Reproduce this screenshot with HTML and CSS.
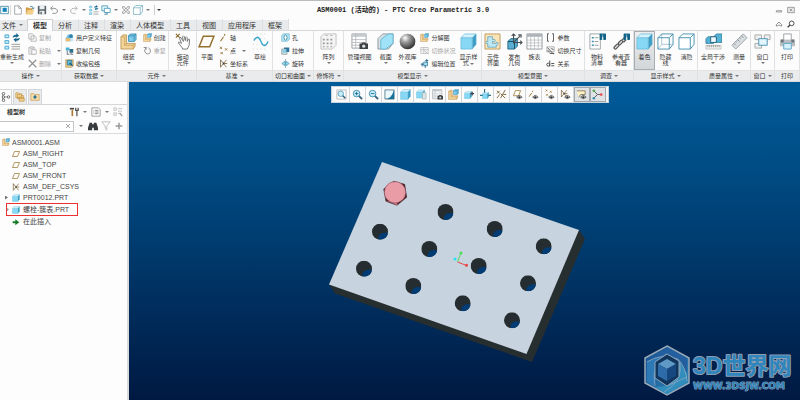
FILE: index.html
```html
<!DOCTYPE html>
<html lang="zh-CN">
<head>
<meta charset="utf-8">
<title>ASM0001 (活动的) - PTC Creo Parametric 3.0</title>
<link rel="stylesheet" href="styles.css">
</head>
<body>
<svg class="sprite" aria-hidden="true">
  <!-- shared shapes -->
  <symbol id="cube" viewBox="0 0 18 18"><path d="M1 5 5 1h12l-4 4z" fill="#d6f2fc"/><path d="M13 5l4-4v11l-4 5z" fill="#3f9cc4"/><path d="M1 5h12v12H1z" fill="#86d8f4"/><path d="M1 5 5 1h12v11l-4 5H1zM1 5h12v12M13 5l4-4" fill="none" stroke="#5cb4d4" stroke-width=".7"/></symbol>
  <symbol id="cube-hidden" viewBox="0 0 18 18"><path d="M1 5 5 1h12v11l-4 5H1z" fill="#fff"/><path d="M5 1v11h12M1 17l4-5" fill="none" stroke="#a9c4cf"/><path d="M1 5 5 1h12v11l-4 5H1zM1 5h12v12M13 5l4-4" fill="none" stroke="#4792ae"/></symbol>
  <symbol id="cube-wire" viewBox="0 0 18 18"><path d="M1 5 5 1h12v11l-4 5H1zM1 5h12v12M13 5l4-4" fill="#fff" stroke="#4792ae"/></symbol>
  <symbol id="asm" viewBox="0 0 18 18"><path d="M1 4 3 2h4v9h9v3l-2 3H1z" fill="#f2d49b" stroke="#b58a45" stroke-width=".8"/><path d="M1 4h4v9h9v4M5 13l2-2M14 13l2-2" fill="none" stroke="#c79b52" stroke-width=".8"/><path d="M9 3l2-2h6v6l-2 2H9z" fill="#7ccbea" stroke="#2b83aa" stroke-width=".8"/><path d="M9 3h6v6M15 3l2-2" fill="none" stroke="#2b83aa" stroke-width=".8"/></symbol>
  <symbol id="plane" viewBox="0 0 16 16"><path d="M5 3h10l-4 10H1z" fill="#fffdf5" stroke="#92702e" stroke-width="1.4"/></symbol>
  <symbol id="csys" viewBox="0 0 12 12"><path d="M2 1l4 5 4-5M2 11l4-5 4 5M2 1v10M6 6h5" fill="none" stroke="#74582a"/><circle cx="6" cy="6" r="1.2" fill="#444"/></symbol>
  <symbol id="axis" viewBox="0 0 12 12"><path d="M2 11 6 5M7 3.500 8 1.500" stroke="#997431" stroke-width="1.500"/></symbol>
  <symbol id="points" viewBox="0 0 12 12"><path d="M1 1l3 3m0-3L1 4M8 3l3 3m0-3L8 6M2 8l3 3m0-3-3 3" stroke="#92702e" stroke-width="1.100"/></symbol>
  <symbol id="eye" viewBox="0 0 12 12"><path d="M5 9q3-4 6 0-3 3-6 0z" fill="#ccc" stroke="#444" stroke-width=".8"/><circle cx="8" cy="9" r="1.200" fill="#333"/></symbol>
  <symbol id="lens" viewBox="0 0 12 12"><path d="M7 7l4 4" stroke="#315f78" stroke-width="2"/><circle cx="5" cy="5" r="3.600" fill="#c9eefb" stroke="#3f8eae"/></symbol>
  <symbol id="info" viewBox="0 0 8 8"><rect width="8" height="8" rx="1" fill="#126487"/><path d="M4 1.500v1M4 3.500V7M3 7h2" stroke="#fff" stroke-width="1.200"/></symbol>
  <!-- quick access -->
  <symbol id="app" viewBox="0 0 12 12"><rect x="1" y="1" width="10" height="10" fill="#fff" stroke="#36809e"/><rect x="3.500" y="3" width="5.500" height="5.500" fill="#1584b9"/></symbol>
  <symbol id="new" viewBox="0 0 12 12"><path d="M2 1h5l3 3v7H2z" fill="#fff" stroke="#7e8489" stroke-width=".8"/><path d="M7 1v3h3" fill="none" stroke="#7e8489" stroke-width=".8"/></symbol>
  <symbol id="open" viewBox="0 0 12 12"><path d="M1 3h3l1 1h4v7H1z" fill="#d19b48"/><path d="M1 11l2-5h8l-2 5z" fill="#f4cf87"/><path d="M6 2q3-2 4 2M8.500 3.500 10 5l1-2" fill="none" stroke="#38738c" stroke-width=".9"/></symbol>
  <symbol id="save" viewBox="0 0 12 12"><path d="M1 1h10v10H1z" fill="#586268"/><path d="M3 1h6v4H3zM3 7h6v4H3z" fill="#edf0f1"/><path d="M4 8h2v3H4z" fill="#6d767b"/></symbol>
  <symbol id="undo" viewBox="0 0 12 12"><path d="M4 10h4q3-1 2-4-1-2-4-2H2M4.500 1.500 2 4l2.500 2.500" fill="none" stroke="#929799" stroke-width="1.200"/></symbol>
  <symbol id="redo" viewBox="0 0 12 12"><path d="M8 10H4Q1 9 2 6q1-2 4-2h4M7.500 1.500 10 4 7.500 6.500" fill="none" stroke="#b7babc" stroke-width="1.200"/></symbol>
  <symbol id="regen" viewBox="0 0 18 18"><path d="M1 2h4v3H1zM1 8h4v3H1zM1 14h4v3H1z" fill="#bceafa" stroke="#4dabcf"/><path d="M8 12h9M8 14.500h9M8 17h9" stroke="#999"/><path d="M9 5q1-4 4-3V0l3 3-3 2V4q-2 0-4 1zM17 5q-1 4-4 3v2l-3-3 3-2v1q2 0 4-1z" fill="#17678d"/></symbol>
  <symbol id="windows" viewBox="0 0 12 12"><path d="M1 1h7v6H1z" fill="#e8f7fc" stroke="#4799b6"/><path d="M4 4h7v5H4z" fill="#fff" stroke="#4799b6"/><path d="M4 11h4l-2-2" fill="none" stroke="#337894"/></symbol>
  <symbol id="closewin" viewBox="0 0 12 12"><path d="M2 2h2l2 3 2-3h2v2L7 6l3 2v2H8L6 7l-2 3H2V8l3-2-3-2z" fill="#fff" stroke="#777" stroke-width=".8"/></symbol>
  <!-- ribbon small -->
  <symbol id="copy" viewBox="0 0 12 12"><path d="M1 1h5l2 2v5H1zM4 4h5l2 2v5H4z" fill="#f8f8f8" stroke="#aaa"/></symbol>
  <symbol id="paste" viewBox="0 0 12 12"><path d="M1 2h8v9H1z" fill="#e7e7e7" stroke="#bbb"/><path d="M3 1h4v2H3zM5 5h6v6H5z" fill="#fafafa" stroke="#aaa"/></symbol>
  <symbol id="delete" viewBox="0 0 12 12"><path d="M1 1l10 10M11 1 1 11" stroke="#8f8f8f" stroke-width="1.500"/></symbol>
  <symbol id="udf" viewBox="0 0 12 12"><path d="M1 7l3-5h5l2 4-3 5H1z" fill="#6abbe0"/><path d="M1 7h6v4H1z" fill="#f2bc66"/><circle cx="8" cy="4" r="2.500" fill="#307faa"/><path d="M7 7l4-1v5H7z" fill="#c7e8f5"/></symbol>
  <symbol id="copygeom" viewBox="0 0 12 12"><path d="M1 2h5v4H1z" fill="#4cb3d6"/><path d="M6 4h5v5H6z" fill="#2c718e"/><path d="M3 6v5h3M8 8v3h3" fill="none" stroke="#738088" stroke-width="1.400"/></symbol>
  <symbol id="shrink" viewBox="0 0 12 12"><path d="M1 1h10v8L9 11H1z" fill="#efcf89" stroke="#a2844d" stroke-width=".8"/><path d="M3 2h6v6H3z" fill="#63bee1" stroke="#246f8e"/><path d="M6 5l4 4" stroke="#17576f" stroke-width="1.500"/></symbol>
  <symbol id="repeat" viewBox="0 0 12 12"><path d="M4 2Q0 7 4 10q5 2 6-3 0-3-3-5M4 1v4M4 2H1" fill="none" stroke="#888" stroke-width="1.200"/></symbol>
  <symbol id="hole" viewBox="0 0 12 12"><path d="M1 3l3-2h7v8l-3 2H1z" fill="#b7e9f8" stroke="#57a8c4" stroke-width=".8"/><ellipse cx="6" cy="6" rx="2" ry="3.500" fill="#fff" stroke="#2b7895"/></symbol>
  <symbol id="extrude" viewBox="0 0 12 12"><path d="M1 4h7v7H1z" fill="#dce7eb" stroke="#879399"/><path d="M4 2h7v6H7V4H4z" fill="#33749a"/><path d="M2 5h5v4H2z" fill="#85cce5"/></symbol>
  <symbol id="revolve" viewBox="0 0 12 12"><path d="M1 6l4-3v2h2V3l4 3-4 3V7H5v2z" fill="#8ed9f0" stroke="#458da9" stroke-width=".8"/><path d="M6 0v12" stroke="#4a91ab" stroke-width=".8"/></symbol>
  <symbol id="status" viewBox="0 0 12 12"><path d="M1 2h10v8H1zM1 5h10M5 2v8" fill="#f5f5f5" stroke="#bbb"/><path d="M6 6l5 5" stroke="#aaa"/></symbol>
  <symbol id="editpos" viewBox="0 0 12 12"><path d="M5 4h5v5H5z" fill="#acdff0" stroke="#367a9c"/><path d="M1 7h4M3 5v5M9 0v5M7 2h4M7 8v4" stroke="#286c8e" stroke-width="1.200"/></symbol>
  <symbol id="params" viewBox="0 0 12 12"><path d="M4 1H2v10h2M8 1h2v10H8" fill="none" stroke="#555" stroke-width="1.200"/></symbol>
  <symbol id="dims" viewBox="0 0 12 12"><path d="M1 1h10v7H1z" fill="#eee" stroke="#888" stroke-width=".7"/><path d="M2 2l8 9M2 6l3 2M7 3l3 2M5 10h6" stroke="#555" stroke-width="1.200"/></symbol>
  <symbol id="relations" viewBox="0 0 12 12"><circle cx="3" cy="7.500" r="2" fill="none" stroke="#444" stroke-width="1.200"/><path d="M5 2v8M7 6h4M7 9h4" stroke="#444" stroke-width="1.200"/></symbol>
  <!-- ribbon large -->
  <symbol id="hand" viewBox="0 0 18 18"><path d="M2 1l4 4m0-4L2 5" stroke="#8d6929" stroke-width="1.200"/><path d="M9 16 5 11q-1-2 1-1l2 1-2-5q0-2 1.500-1L10 9 9 4q1-2 2 0l1 4V5q1-2 2 0v4l1-2q1-1 1.500 0L16 13l-2 4H9z" fill="#fff" stroke="#555" stroke-width=".8"/></symbol>
  <symbol id="sketch" viewBox="0 0 18 18"><path d="M1 1h16M1 6h16M1 12h16M1 17h16" stroke="#c3c7ca" stroke-width=".8" stroke-dasharray="1 3"/><path d="M2 8q4-7 7 0 4 10 8 1" fill="none" stroke="#3aa7cd" stroke-width="1.500"/></symbol>
  <symbol id="pattern" viewBox="0 0 18 18"><path d="M1 4l3-3h13v12l-4 4H1z" fill="#f4f4f4" stroke="#c0c0c0"/><path d="M3 6h2v2H3zM7 6h2v2H7zM11 6h2v2h-2zM3 10h2v2H3zM7 10h2v2H7zM11 10h2v2h-2zM3 14h2v1H3zM7 14h2v1H7zM11 14h2v1h-2zM6 2h2v1H6zM11 2h2v1h-2z" fill="#999"/></symbol>
  <symbol id="viewmgr" viewBox="0 0 18 18"><path d="M1 1h15v15H1z" fill="#fff" stroke="#9aa0a4"/><path d="M1 1h15v3H1z" fill="#c4cacd"/><path d="M1 7h15M1 10h15M1 13h15M5 1v15" stroke="#adb2b5" stroke-width=".8"/><path d="M9 11h2l1-1h3l1 1h2v6H9z" fill="#3c4246"/><circle cx="13.500" cy="14" r="1.700" fill="#ddd"/></symbol>
  <symbol id="section" viewBox="0 0 18 18"><path d="M1 6 6 1h11v10l-5 6H1z" fill="#d8e2e7" stroke="#75828a" stroke-width=".8"/><path d="M4 7 12 1h5v10l-8 6H4z" fill="#a0e3f8" stroke="#6bb6d0"/></symbol>
  <radialGradient id="ball" cx=".35" cy=".28" r=".75"><stop offset="0" stop-color="#fff"/><stop offset=".35" stop-color="#a0a0a0"/><stop offset="1" stop-color="#2c2c2c"/></radialGradient>
  <symbol id="sphere" viewBox="0 0 18 18"><circle cx="9" cy="9" r="8.300" fill="url(#ball)"/></symbol>
  <symbol id="interface" viewBox="0 0 18 18"><path d="M1 1h16v16H1z" fill="#fae3b5" stroke="#bd9c62"/><path d="M4 4h5v3q3-1 3 1t-3 1v2h4v-1q2-1 2 1t-2 2v2H4v-4q-2 1-2-1t2-1z" fill="#bfe8f5" stroke="#5ba2bf" stroke-width=".8"/></symbol>
  <symbol id="publish" viewBox="0 0 18 18"><path d="M2 9l3-3h7v8l-3 3H2z" fill="#5aaed1" stroke="#276985"/><path d="M2 9h7v8M9 9l3-3" fill="none" stroke="#174e64"/><path d="M8 11V1M8 10h9M8 10l7-7M6 3l2-2 2 2M15 8l2 2-2 2M13 2h3v3" fill="none" stroke="#434b4f" stroke-width="1.100"/></symbol>
  <symbol id="table" viewBox="0 0 18 18"><path d="M1 1h16v16H1z" fill="#fff" stroke="#92989b"/><path d="M1 1h16v3H1z" fill="#aeb4b7"/><path d="M1 7.500h16M1 10.500h16M1 13.500h16M5 4v13M9 4v13M13 4v13" stroke="#b5babd" stroke-width=".8"/></symbol>
  <symbol id="bom" viewBox="0 0 18 18"><path d="M1 1h11v16H1z" fill="#fff" stroke="#9ba2a6"/><path d="M3 5h2M3 9h2M3 13h2" stroke="#348dac" stroke-width="1.500"/><path d="M6 5h4M6 9h4M6 13h4" stroke="#999"/><use href="#info" x="11" width="7" height="8"/></symbol>
  <symbol id="chain" viewBox="0 0 18 18"><path d="M2.500 15.500 5 13M7 11l2-2M11 8l2-2" stroke="#555" stroke-width="4" stroke-linecap="round"/><path d="M2.500 15.500 5 13M7 11l2-2M11 8l2-2" stroke="#ddd" stroke-width="1.500" stroke-linecap="round"/><use href="#info" x="11" width="7" height="8"/></symbol>
  <symbol id="clash" viewBox="0 0 18 18"><path d="M1 6l2-2h6v7H1zM10 3l2-2h6v9h-8z" fill="#55b3d6" stroke="#2b7897" stroke-width=".8"/><path d="M6 4h6v6H6z" fill="#eef9fd" stroke="#24627d"/><path d="M1 13h16v4H1z" fill="#eee" stroke="#aaa" stroke-width=".6"/><path d="M3 13v2m2-2v2m2-2v2m2-2v2m2-2v2m2-2v2m2-2v2" stroke="#777" stroke-width=".7"/></symbol>
  <symbol id="ruler" viewBox="0 0 18 18"><path d="M1 13 13 1l4 4L5 17z" fill="#d8dee1" stroke="#98a0a4"/><path d="M3 11l2 2M5 9l1 1M7 7l2 2M9 5l1 1M11 3l2 2" stroke="#6c7376" stroke-width=".8"/></symbol>
  <symbol id="window" viewBox="0 0 18 18"><path d="M1 2h7v5H1zM11 2h6v5h-6zM1 11h7v5H1z" fill="#eee" stroke="#aaa"/><path d="M5 6h9v7H5z" fill="#e2f6fd" stroke="#4b93af"/></symbol>
  <symbol id="print" viewBox="0 0 18 18"><path d="M5 1h8v7H5z" fill="#fff" stroke="#9aa1a5"/><path d="M1 7h16v7H1z" fill="#b9bfc3"/><path d="M2 7h3v3H2zM13 7h3v3h-3z" fill="#6d777d"/><path d="M5 11h8v6H5z" fill="#d8f2fc" stroke="#5ba7c4"/></symbol>
  <!-- navigator -->
  <symbol id="treetab" viewBox="0 0 12 12"><path d="M2 2v8M2 6h6" stroke="#888"/><circle cx="3" cy="2" r="1.500" fill="#fff" stroke="#555"/><circle cx="3" cy="6" r="1.500" fill="#fff" stroke="#555"/><circle cx="3" cy="10" r="1.500" fill="#fff" stroke="#555"/><circle cx="9" cy="6" r="1.500" fill="#fff" stroke="#555"/></symbol>
  <symbol id="folders" viewBox="0 0 12 12"><path d="M1 1h3l1 1h3v5H1zM3 3h3l1 1h3v4H3zM5 6h2l1 1h3v4H5z" fill="#f6d697" stroke="#bd9041" stroke-width=".8"/></symbol>
  <symbol id="favorite" viewBox="0 0 12 12"><path d="M1 2h4l1 1h5v7H1z" fill="#f7dda6" stroke="#c79d52" stroke-width=".8"/><path d="M6 4v4M4 6h4" stroke="#246f94" stroke-width="1.800"/></symbol>
  <symbol id="tools" viewBox="0 0 12 12"><path d="M1 1h5v2H1z" fill="#444"/><path d="M4 3v8" stroke="#b17a35" stroke-width="2"/><path d="M8 1v3h3V1M9.500 4v7" fill="none" stroke="#555" stroke-width="1.500"/></symbol>
  <symbol id="list" viewBox="0 0 12 12"><path d="M1 1h8l2 2v8H1z" fill="#fff" stroke="#777" stroke-width=".8"/><path d="M3 4h1M5 4h4M3 6h1M5 6h4M3 8h1M5 8h4" stroke="#777"/></symbol>
  <symbol id="treefind" viewBox="0 0 12 12"><path d="M1 1h3v3H1zM1 7h3v3H1zM6 2h5M6 5h5M6 8h2" fill="none" stroke="#bcbcbc"/><path d="M8 7l3 4" stroke="#999" stroke-width="1.500"/></symbol>
  <symbol id="binoculars" viewBox="0 0 12 12"><path d="M2 2h3v2h2V2h3l2 6v3H7V8H5v3H0V8z" fill="#383c3f"/></symbol>
  <symbol id="filter" viewBox="0 0 12 12"><path d="M1 1h10L7 6v5L5 9V6z" fill="#fff" stroke="#b5b5b5"/></symbol>
  <symbol id="plus" viewBox="0 0 12 12"><path d="M6 2v8M2 6h8" stroke="#999" stroke-width="1.800"/></symbol>
  <symbol id="insert" viewBox="0 0 12 12"><path d="M1 5h4V2l6 4.500L5 11V8H1z" fill="#187d28"/></symbol>
  <!-- graphics toolbar -->
  <symbol id="refit" viewBox="0 0 12 12"><path d="M1 1h10v10H1z" fill="#fff" stroke="#999" stroke-width=".7"/><use href="#lens" x="1" y="1" width="10" height="10"/></symbol>
  <symbol id="zoomin" viewBox="0 0 12 12"><use href="#lens"/><path d="M5 3v4M3 5h4" stroke="#216b91"/></symbol>
  <symbol id="zoomout" viewBox="0 0 12 12"><use href="#lens"/><path d="M3 5h4" stroke="#216b91"/></symbol>
  <symbol id="repaint" viewBox="0 0 12 12"><path d="M1 1h10v10H1z" fill="#eaf7fc" stroke="#5e818f"/><path d="M11 1v10H1q7 0 10-10z" fill="#16729b"/></symbol>
  <symbol id="saved" viewBox="0 0 12 12"><use href="#cube" width="10" height="11"/><path d="M7 4h4v7H7z" fill="#dde2e4" stroke="#9aa" stroke-width=".6"/></symbol>
  <symbol id="annot" viewBox="0 0 12 12"><use href="#cube" y="2" width="9" height="9"/><path d="M7 5h4M9 3v4" stroke="#445" stroke-width="1.200"/></symbol>
  <symbol id="spin" viewBox="0 0 12 12"><use href="#cube" x="2" y="3" width="8" height="8"/><path d="M5 0v4M0 7h3M9 7h3" stroke="#2c6f8c" stroke-width="1.200"/></symbol>
  <symbol id="datums" viewBox="0 0 12 12"><path d="M1 10 4 6M5 10 10 1M5 5l5 5M1 2l3 3m0-3L1 5M8 6h3" fill="none" stroke="#7d6435"/></symbol>
  <symbol id="planeeye" viewBox="0 0 12 12"><use href="#plane" width="11" height="9"/><use href="#eye"/></symbol>
  <symbol id="axiseye" viewBox="0 0 12 12"><use href="#axis" width="8" height="10"/><use href="#eye"/></symbol>
  <symbol id="pointeye" viewBox="0 0 12 12"><use href="#points" width="10" height="8"/><use href="#eye"/></symbol>
  <symbol id="csyseye" viewBox="0 0 12 12"><use href="#csys" width="9" height="10"/><use href="#eye"/></symbol>
  <symbol id="noteeye" viewBox="0 0 12 12"><path d="M1 2h9v4H5L3 9" fill="#fff1c4" stroke="#7f7455" stroke-width=".9"/><use href="#eye"/></symbol>
  <symbol id="spincenter" viewBox="0 0 12 12"><path d="M2 2l4 4-4 4M6 6h4" fill="none" stroke="#555"/><circle cx="2" cy="2" r="1.400" fill="#4ca94c"/><circle cx="2" cy="10" r="1.400" fill="#398fb0"/><circle cx="10" cy="6" r="1.500" fill="#e65050"/></symbol>
  <symbol id="hole-through" viewBox="-8 -8 16 16"><circle r="8" fill="#262d30"/><path d="M-1.700 7.800Q-2 1.500 4.500 1 6.500.7 7.900 1.500 7 6.800 1.500 7.900z" fill="#003b74"/></symbol>
</svg>

<div class="app">
  <header class="titlebar">
    <div class="quick">
      <svg class="appicon"><use href="#app"/></svg>
      <button aria-label="新建"><svg><use href="#new"/></svg></button>
      <button aria-label="打开"><svg><use href="#open"/></svg></button>
      <button aria-label="保存"><svg><use href="#save"/></svg></button>
      <button aria-label="撤消"><svg><use href="#undo"/></svg></button>
      <button class="drop" aria-label="撤消列表"><i class="caret"></i></button>
      <button aria-label="重做"><svg><use href="#redo"/></svg></button>
      <button class="drop" aria-label="重做列表"><i class="caret"></i></button>
      <button aria-label="重新生成模型"><svg><use href="#regen"/></svg></button>
      <button aria-label="窗口列表"><svg><use href="#windows"/></svg></button>
      <button class="drop" aria-label="更多窗口"><i class="caret"></i></button>
      <button aria-label="关闭窗口"><svg><use href="#closewin"/></svg></button>
      <button aria-label="模型显示"><svg><use href="#cube-wire"/></svg></button>
      <button class="drop" aria-label="显示列表"><i class="caret"></i></button>
      <button class="drop customize" aria-label="自定义"><i class="caret"></i></button>
    </div>
    <h1>ASM0001 (活动的) - PTC Creo Parametric 3.0</h1>
    <div class="syscontrols">
      <button aria-label="最小化"><svg viewBox="0 0 12 12"><path d="M2 7h8v2H2z" fill="#eee" stroke="#777"/></svg></button>
      <button aria-label="关闭"><svg viewBox="0 0 12 12"><path d="M1 2h10v8H1zM4 4l4 4M8 4 4 8" fill="#eee" stroke="#777"/></svg></button>
    </div>
  </header>

  <nav class="tabs">
    <div class="tablist">
      <button class="file">文件<i class="caret"></i></button>
      <button class="active">模型</button><button>分析</button><button>注释</button><button>渲染</button><button>人体模型</button><button>工具</button><button>视图</button><button>应用程序</button><button>框架</button>
    </div>
    <div class="tabtools">
      <button aria-label="折叠功能区"><svg viewBox="0 0 12 12"><path d="M2 7l4-4 4 4v2H8L6 7 4 9H2z" fill="#fff" stroke="#555"/></svg></button>
      <button aria-label="搜索命令"><svg viewBox="0 0 12 12"><circle cx="7" cy="5" r="3.500" fill="#fff" stroke="#444" stroke-width="1.400"/><path d="M4.500 7.500 1 11" stroke="#444" stroke-width="2"/></svg></button>
    </div>
  </nav>

  <div class="ribbon">
    <section class="group operations">
      <div class="body">
        <button class="big"><svg><use href="#regen"/></svg><span>重新生成</span><i class="caret"></i></button>
        <div class="stack muted">
          <button><svg><use href="#copy"/></svg>复制</button>
          <button><svg><use href="#paste"/></svg>粘贴<i class="caret"></i></button>
          <button><svg><use href="#delete"/></svg>删除<i class="caret"></i></button>
        </div>
      </div>
      <h2>操作<i class="caret"></i></h2>
    </section>
    <section class="group getdata">
      <div class="body">
        <div class="stack">
          <button><svg><use href="#udf"/></svg>用户定义特征</button>
          <button><svg><use href="#copygeom"/></svg>复制几何</button>
          <button><svg><use href="#shrink"/></svg>收缩包络</button>
        </div>
      </div>
      <h2>获取数据<i class="caret"></i></h2>
    </section>
    <section class="group component">
      <div class="body">
        <button class="big"><svg><use href="#asm"/></svg><span>组装</span><i class="caret"></i></button>
        <div class="stack">
          <button><svg><use href="#asm"/></svg>创建</button>
          <button class="muted"><svg><use href="#repeat"/></svg>重复</button>
        </div>
        <button class="big divided"><svg><use href="#hand"/></svg><span>拖动<br>元件</span></button>
      </div>
      <h2>元件<i class="caret"></i></h2>
    </section>
    <section class="group datum">
      <div class="body">
        <button class="big"><svg><use href="#plane"/></svg><span>平面</span></button>
        <div class="stack">
          <button><svg><use href="#axis"/></svg>轴</button>
          <button><svg><use href="#points"/></svg>点<i class="caret"></i></button>
          <button><svg><use href="#csys"/></svg>坐标系</button>
        </div>
        <button class="big"><svg><use href="#sketch"/></svg><span>草绘</span></button>
      </div>
      <h2>基准<i class="caret"></i></h2>
    </section>
    <section class="group cuts">
      <div class="body">
        <div class="stack">
          <button><svg><use href="#hole"/></svg>孔</button>
          <button><svg><use href="#extrude"/></svg>拉伸</button>
          <button><svg><use href="#revolve"/></svg>旋转</button>
        </div>
      </div>
      <h2>切口和曲面<i class="caret"></i></h2>
    </section>
    <section class="group">
      <div class="body"><button class="big"><svg><use href="#pattern"/></svg><span>阵列</span><i class="caret"></i></button></div>
      <h2>修饰符<i class="caret"></i></h2>
    </section>
    <section class="group display">
      <div class="body">
        <button class="big"><svg><use href="#viewmgr"/></svg><span>管理视图</span><i class="caret"></i></button>
        <button class="big"><svg><use href="#section"/></svg><span>截面</span><i class="caret"></i></button>
        <button class="big"><svg><use href="#sphere"/></svg><span>外观库</span><i class="caret"></i></button>
        <div class="stack">
          <button><svg><use href="#asm"/></svg>分解图</button>
          <button class="muted"><svg><use href="#status"/></svg>切换状况</button>
          <button><svg><use href="#editpos"/></svg>编辑位置</button>
        </div>
        <button class="big"><svg><use href="#cube"/></svg><span>显示样<br>式 <i class="caret"></i></span></button>
      </div>
      <h2>模型显示<i class="caret"></i></h2>
    </section>
    <section class="group intent">
      <div class="body">
        <button class="big"><svg><use href="#interface"/></svg><span>元件<br>界面</span></button>
        <button class="big"><svg><use href="#publish"/></svg><span>发布<br>几何</span></button>
        <button class="big"><svg><use href="#table"/></svg><span>族表</span></button>
        <div class="stack">
          <button><svg><use href="#params"/></svg>参数</button>
          <button><svg><use href="#dims"/></svg>切换尺寸</button>
          <button><svg><use href="#relations"/></svg>关系</button>
        </div>
      </div>
      <h2>模型意图<i class="caret"></i></h2>
    </section>
    <section class="group">
      <div class="body">
        <button class="big"><svg><use href="#bom"/></svg><span>物料<br>清单</span></button>
        <button class="big"><svg><use href="#chain"/></svg><span>参考查<br>看器</span></button>
      </div>
      <h2>调查<i class="caret"></i></h2>
    </section>
    <section class="group">
      <div class="body">
        <button class="big pressed" aria-pressed="true"><svg><use href="#cube"/></svg><span>着色</span></button>
        <button class="big"><svg><use href="#cube-hidden"/></svg><span>隐藏<br>线</span></button>
        <button class="big"><svg><use href="#cube-wire"/></svg><span>消隐</span></button>
      </div>
      <h2>显示样式<i class="caret"></i></h2>
    </section>
    <section class="group mass">
      <div class="body">
        <button class="big"><svg><use href="#clash"/></svg><span>全局干涉</span><i class="caret"></i></button>
        <button class="big"><svg><use href="#ruler"/></svg><span>测量</span><i class="caret"></i></button>
      </div>
      <h2>质量属性<i class="caret"></i></h2>
    </section>
    <section class="group">
      <div class="body"><button class="big"><svg><use href="#window"/></svg><span>窗口</span><i class="caret"></i></button></div>
      <h2>窗口<i class="caret"></i></h2>
    </section>
    <section class="group">
      <div class="body"><button class="big"><svg><use href="#print"/></svg><span>打印</span></button></div>
      <h2>打印</h2>
    </section>
  </div>

  <main class="workspace">
    <aside class="navigator">
      <div class="navtabs">
        <button class="active" aria-label="模型树"><svg><use href="#treetab"/></svg></button>
        <button aria-label="文件夹浏览器"><svg><use href="#folders"/></svg></button>
        <button aria-label="收藏夹"><svg><use href="#favorite"/></svg></button>
      </div>
      <div class="navhead">
        <h2>模型树</h2>
        <button aria-label="设置"><svg><use href="#tools"/></svg></button>
        <button class="drop" aria-label="设置列表"><i class="caret"></i></button>
        <button aria-label="显示"><svg><use href="#list"/></svg></button>
        <button class="drop" aria-label="显示列表"><i class="caret"></i></button>
        <button aria-label="树查找"><svg><use href="#treefind"/></svg></button>
      </div>
      <div class="navsearch">
        <div class="field"><input type="text" aria-label="搜索模型树"><button aria-label="清除"><svg viewBox="0 0 12 12"><path d="M2 2l8 8M10 2l-8 8" stroke="#888" stroke-width="1.500"/></svg></button></div>
        <button class="drop" aria-label="搜索选项"><i class="caret"></i></button>
        <button aria-label="查找"><svg><use href="#binoculars"/></svg></button>
        <button aria-label="过滤"><svg><use href="#filter"/></svg></button>
        <button aria-label="添加"><svg><use href="#plus"/></svg></button>
      </div>
      <ul class="tree">
        <li class="root"><svg><use href="#asm"/></svg>ASM0001.ASM</li>
        <li><i></i><svg><use href="#plane"/></svg>ASM_RIGHT</li>
        <li><i></i><svg><use href="#plane"/></svg>ASM_TOP</li>
        <li><i></i><svg><use href="#plane"/></svg>ASM_FRONT</li>
        <li><i></i><svg><use href="#csys"/></svg>ASM_DEF_CSYS</li>
        <li><i class="twist"></i><svg><use href="#cube"/></svg>PRT0012.PRT</li>
        <li class="marked"><i class="twist"></i><svg><use href="#cube"/></svg>螺栓-簇表.PRT</li>
        <li><i></i><svg><use href="#insert"/></svg>在此插入</li>
      </ul>
    </aside>

    <div class="viewport">
      <svg class="scene" viewBox="129 82 671 318" role="img" aria-label="装配模型">
        <path d="M329 284l6 9.500L532 362l53-123-6-9z" fill="#272e30"/>
        <path d="M382 162l197 68-52.500 124L329 284.500z" fill="#c7d3de"/>
        <g>
          <use href="#hole-through" x="437.500" y="204" width="16" height="16"/>
          <use href="#hole-through" x="486.700" y="221" width="16" height="16"/>
          <use href="#hole-through" x="535.700" y="238.300" width="16" height="16"/>
          <use href="#hole-through" x="372" y="223.700" width="16" height="16"/>
          <use href="#hole-through" x="421.300" y="241" width="16" height="16"/>
          <use href="#hole-through" x="470.700" y="258" width="16" height="16"/>
          <use href="#hole-through" x="520" y="275.300" width="16" height="16"/>
          <use href="#hole-through" x="356" y="260.700" width="16" height="16"/>
          <use href="#hole-through" x="405.300" y="278" width="16" height="16"/>
          <use href="#hole-through" x="454.700" y="295.300" width="16" height="16"/>
          <use href="#hole-through" x="504" y="312.300" width="16" height="16"/>
        </g>
        <path d="M383.700 189l10-7.700 11 3 2 13-9.700 8-11-4z" fill="#531f27" stroke="#32161b" stroke-width=".5"/>
        <path d="M385 201l5 1 7 3.300 1-4z" fill="#c77782"/>
        <circle cx="395" cy="192.300" r="10.700" fill="#e99ba6" stroke="#73414a" stroke-width=".5"/>
        <path d="M457.500 262l3.500-9" stroke="#55dd62"/><circle cx="461" cy="253" r="1.500" fill="#4cdc59"/>
        <path d="M457.500 262l9 3.500" stroke="#e84848"/><circle cx="466.500" cy="265.300" r="1.500" fill="#f04444"/>
        <circle cx="455" cy="259" r="1.500" fill="#25e4f3"/>
      </svg>

      <div class="viewtools" role="toolbar" aria-label="图形工具栏">
        <button aria-label="重新调整"><svg><use href="#refit"/></svg></button>
        <button aria-label="放大"><svg><use href="#zoomin"/></svg></button>
        <button aria-label="缩小"><svg><use href="#zoomout"/></svg></button>
        <button aria-label="重画"><svg><use href="#repaint"/></svg></button>
        <button aria-label="显示样式"><svg><use href="#cube"/></svg></button>
        <button aria-label="已保存方向"><svg><use href="#saved"/></svg></button>
        <button aria-label="视图管理器"><svg><use href="#viewmgr"/></svg></button>
        <button aria-label="分解"><svg><use href="#asm"/></svg></button>
        <button aria-label="方向"><svg><use href="#annot"/></svg></button>
        <button aria-label="旋转"><svg><use href="#spin"/></svg></button>
        <button aria-label="基准显示"><svg><use href="#datums"/></svg></button>
        <button aria-label="平面显示"><svg><use href="#planeeye"/></svg></button>
        <button aria-label="轴显示"><svg><use href="#axiseye"/></svg></button>
        <button aria-label="点显示"><svg><use href="#pointeye"/></svg></button>
        <button aria-label="坐标系显示"><svg><use href="#csyseye"/></svg></button>
        <button class="on" aria-label="注释显示"><svg><use href="#noteeye"/></svg></button>
        <button class="on" aria-label="旋转中心"><svg><use href="#spincenter"/></svg></button>
      </div>

      <svg class="watermark" viewBox="0 0 156 54">
        <defs><linearGradient id="hex" x2="1" y2="1"><stop offset="0" stop-color="#1b4f8d"/><stop offset="1" stop-color="#2b86ba"/></linearGradient></defs>
        <path d="M23 2 45 14v25L23 51 1 39V14z" fill="url(#hex)" stroke="#9aa9b8" stroke-width="1.500"/>
        <path d="M23 3 43 14v17L36 17 23 10 5 18z" fill="#235f9f"/>
        <path d="M3 17l20-7-11 9v15l-2 8-7-4z" fill="#2d79b6"/>
        <path d="M43 29v9L23 50l-12-7 12-1 12-9V17z" fill="#318dbc"/>
        <path d="M3 18q13-9 31-3 8 9 9 22M22 10Q7 20 11 42M36 18q3 20-16 30M12 34l11 8 20-9" fill="none" stroke="#8ba7bf" stroke-width=".8"/>
        <path d="M23 10l12 7v16l-12 9-12-8V18z" fill="#11365e" stroke="#8da6bc"/>
        <path d="M23 15l9 5-9 5-9-5z" fill="#6099c5"/><path d="M14 20l9 5v12l-9-5z" fill="#2d6ca9"/><path d="M32 20l-9 5v12l9-5z" fill="#17477f"/>
        <text class="brand" x="49" y="30">3D世界网</text>
        <text class="site" x="49" y="45">WWW.3DSJW.COM</text>
      </svg>
    </div>
  </main>
</div>
</body>
</html>
```
FILE: styles.css
```css
* { box-sizing: border-box; }

body {
  margin: 0;
  font: 6px/6px "Liberation Sans", "Noto Sans CJK SC", sans-serif;
  color: #333;
  background: #fcfcfc;
}

button {
  display: flex;
  align-items: center;
  justify-content: center;
  margin: 0;
  padding: 0;
  border: 0;
  background: none;
  font: inherit;
  color: inherit;
  white-space: nowrap;
}

h1, h2 { margin: 0; font: inherit; white-space: nowrap; }

.sprite { position: absolute; width: 0; height: 0; }

.app { display: flex; flex-direction: column; min-height: 100vh; }

.caret {
  flex: none;
  display: inline-block;
  border: 2px solid transparent;
  border-top-color: #777;
  border-bottom-width: 0;
}

.drop { width: 8px; height: 10px; }

/* Title bar */
.titlebar {
  display: grid;
  grid-template-columns: 1fr auto 1fr;
  align-items: center;
  height: 18px;
  border-top: 1px solid #bcbcbc;
}
.quick { display: flex; align-items: center; }
.quick svg { width: 10px; height: 10px; }
.quick button { width: 12px; }
.quick .drop { width: 8px; }
.quick .appicon { width: 11px; margin-right: 1px; padding-right: 1px; border-right: 1px solid #ddd; }
.quick .customize { margin-left: 2px; border-left: 1px solid #ccc; }
.customize .caret { border-top-color: #333; }
.titlebar h1 { padding-left: 6px; font: bold 7px/10px "Liberation Mono", "Noto Sans CJK SC", monospace; color: #222; }
.syscontrols, .tabtools { display: flex; justify-content: flex-end; gap: 4px; padding-right: 5px; }
.syscontrols svg { width: 8px; height: 8px; }

/* Ribbon tabs */
.tabs {
  display: flex;
  justify-content: space-between;
  height: 13px;
  border-bottom: 1px solid #d5d7d9;
}
.tablist { display: flex; padding-top: 1px; background: linear-gradient(#fcfcfc 2px, #e8eaeb 2px); }
.tablist button { padding: 0 6px; font-size: 7px; line-height: 11px; border-right: 1px solid #dcdee0; margin-right: -1px; height: 12px; }
.tablist .file { justify-content: flex-start; gap: 3px; width: 28px; padding: 0 2px; }
.tablist .active { position: relative; font-weight: bold; background: #fcfcfc; border: 1px solid #cfd1d3; border-bottom: 0; padding: 0 5px; }
.tabtools svg { width: 8px; height: 8px; }

/* Ribbon */
.ribbon {
  display: grid;
  grid-template-columns:
    minmax(0, 62fr) minmax(0, 55fr) minmax(0, 80fr) minmax(0, 76fr) minmax(0, 41fr)
    minmax(0, 30fr) minmax(0, 138fr) minmax(0, 103fr) minmax(0, 49fr) minmax(0, 64fr)
    minmax(0, 53fr) minmax(0, 24fr) minmax(0, 25fr);
  border-bottom: 1px solid #d8dadc;
}
.group { border-right: 1px solid #dfe1e3; }
.group h2 {
  display: flex;
  align-items: center;
  justify-content: center;
  gap: 2px;
  height: 11px;
  background: #e9ebed;
  border-top: 1px solid #e0e2e4;
}
.body { display: grid; grid-auto-flow: column; grid-auto-columns: minmax(0, 1fr); height: 39px; }
.operations .body { grid-template-columns: 24fr 38fr; }
.component .body { grid-template-columns: 24fr 28fr 28fr; }
.datum .body { grid-template-columns: 20fr 31fr 24fr; }
.display .body { grid-template-columns: 31fr 22fr 22fr 38fr 25fr; }
.intent .body { grid-template-columns: 22fr 21fr 20fr 40fr; }
.mass .body { grid-template-columns: 30fr 22fr; }

.big { flex-direction: column; justify-content: flex-start; padding-top: 2px; }
.big > svg { flex: none; width: 17px; height: 17px; margin-bottom: 4px; }
.big > .caret { margin-top: 2px; }
.divided { border-left: 1px solid #e3e3e3; }
.pressed { border: 1px solid #a9adb0; background: linear-gradient(#eceeef, #d3d6d9); padding-top: 1px; }

.stack button { justify-content: flex-start; gap: 2px; height: 13px; padding-left: 2px; }
.stack svg { flex: none; width: 9px; height: 9px; }
.stack .caret { margin-left: 4px; }
.operations .stack button { padding-left: 4px; }
.getdata .stack button { padding-left: 3px; }
.cuts .stack button { padding-left: 8px; }
.muted { color: #a5a5a5; }

/* Workspace */
.workspace { flex: 1; display: grid; grid-template-columns: 129px minmax(0, 1fr); }

.navigator { border-right: 2px solid #d9dcde; background: #fdfdfd; }
.navtabs { display: flex; gap: 1px; padding-top: 7px; border-bottom: 1px solid #d4d7d9; }
.navtabs button { width: 14px; height: 15px; border: 1px solid #d4d7d9; border-bottom: 0; background: #e9ebec; }
.navtabs .active { width: 12px; border-left: 0; background: #fdfdfd; }
.navtabs svg { width: 10px; height: 10px; }
.navhead, .navsearch { display: flex; align-items: center; height: 14px; }
.navhead svg, .navsearch svg { width: 10px; height: 10px; }
.navhead h2 { flex: 1; padding-left: 7px; font-weight: bold; }
.navhead { gap: 2px; padding-right: 4px; }
.navsearch { gap: 3px; height: 15px; padding-right: 3px; border-bottom: 1px solid #d9dcde; }
.navsearch button { flex: none; }
.field { flex: 1; min-width: 0; display: flex; align-items: center; height: 11px; border: 1px solid #c3c7ca; border-left: 0; background: #fff; }
.field input { flex: 1; min-width: 0; height: 9px; padding: 0 2px; border: 0; outline: 0; background: none; font: inherit; }
.navsearch .field svg { width: 6px; height: 6px; margin-right: 2px; }

.tree { margin: 0; padding: 2px 0 0; list-style: none; font-size: 7px; line-height: 11px; color: #444; }
.tree li { display: flex; align-items: center; gap: 3px; height: 11px; padding-left: 4px; white-space: nowrap; }
.tree .root { height: 12px; padding-left: 2px; gap: 2px; }
.tree svg { width: 8px; height: 8px; }
.tree i { width: 5px; }
.tree .twist { height: 4px; background: #777; clip-path: polygon(20% 0, 80% 50%, 20% 100%); }
.tree .marked { height: 13px; width: fit-content; min-width: 72px; margin-left: 6px; padding: 0 4px 0 0; gap: 3px; border: 1px solid #ee3030; }
.tree .marked .twist { width: 2px; }

.viewport {
  position: relative;
  display: flex;
  align-items: flex-start;
  justify-content: center;
  padding: 4px 0 0 10px;
  background: linear-gradient(#005b99, #004a82 30%, #001942);
}
.scene { position: absolute; inset: 0; width: 100%; height: 100%; }
.viewtools {
  position: relative;
  display: flex;
  padding: 0 2px;
  border: 1px solid #c9d5dd;
  background: #f3f5f6;
}
.viewtools button { width: 16px; height: 15px; border-right: 1px solid #d0d6da; background: #fcfcfc; }
.viewtools .on { border: 1px solid #a2a8ad; background: #dfe3e6; }
.viewtools svg { width: 11px; height: 11px; }

.watermark { position: absolute; right: 0; bottom: 2px; width: 156px; height: 54px; }
.watermark text { fill: #2f86bd; stroke: #8f9db0; stroke-width: 2px; stroke-linejoin: round; paint-order: stroke; font-weight: bold; }
.brand { font-family: "Liberation Sans", "Noto Sans CJK SC", sans-serif; font-size: 23px; }
.watermark .site { font-family: "DejaVu Sans", sans-serif; font-size: 9px; stroke-width: 1px; }
```
